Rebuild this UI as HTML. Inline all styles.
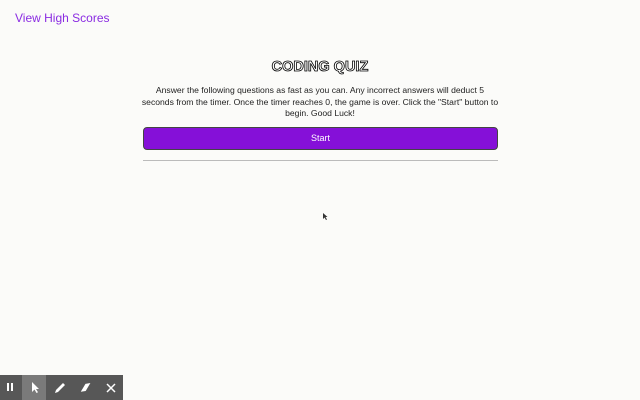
<!DOCTYPE html>
<html><head><style>
body{margin:0;width:640px;height:400px;background:#fbfbf9;font-family:"Liberation Sans",sans-serif;position:relative;overflow:hidden}
.hs{position:absolute;left:15px;top:11px;font-size:12px;color:#8a2be2}
h1{position:absolute;top:59px;left:0;width:640px;text-align:center;margin:0;font-size:14.5px;font-weight:bold;color:#fff;-webkit-text-stroke:0.8px #000}
p{position:absolute;top:85px;left:0;width:640px;margin:0;text-align:center;font-size:8.6px;line-height:11.5px;color:#222;white-space:nowrap}
.btn{position:absolute;left:143px;top:127px;width:353px;height:21px;background:#8510d8;border:1px solid #444;border-radius:4px;color:#fff;font-size:9px;text-align:center;line-height:21px}
.hr{position:absolute;left:143px;top:160px;width:355px;height:1px;background:#bbb}
.tb{position:absolute;left:0;top:375px;width:123px;height:25px;background:#575757}
.sel{position:absolute;left:22px;top:0;width:24px;height:25px;background:#7a7a7a}
</style></head><body>
<div class="hs">View High Scores</div>
<h1>CODING QUIZ</h1>
<p>Answer the following questions as fast as you can. Any incorrect answers will deduct 5<br>seconds from the timer. Once the timer reaches 0, the game is over. Click the "Start" button to<br>begin. Good Luck!</p>
<div class="btn">Start</div>
<div class="hr"></div>
<svg style="position:absolute;left:322px;top:213px" width="6" height="8"><path d="M1 0L1 6L2.5 4.5L4 7L5 6.5L3.5 4L5.5 4Z" fill="#333"/></svg>
<div class="tb"><div class="sel"></div>
<svg width="123" height="25" style="position:absolute;left:0;top:0">
<rect x="7" y="8" width="2" height="8" fill="#fff"/><rect x="11" y="8" width="2" height="8" fill="#fff"/>
<path d="M32 7L32 17L34.5 14.5L36.5 18L38 17.2L36 14L39 14Z" fill="#fff"/>
<path d="M55 18L56 15L63 8L65 10L58 17Z" fill="#fff"/>
<path d="M80 16L86 9L91 9L85 16Z" fill="#fff" transform="rotate(-10 85 12)"/>
<path d="M107 9L115 17M115 9L107 17" stroke="#fff" stroke-width="1.5"/>
</svg></div>
</body></html>
